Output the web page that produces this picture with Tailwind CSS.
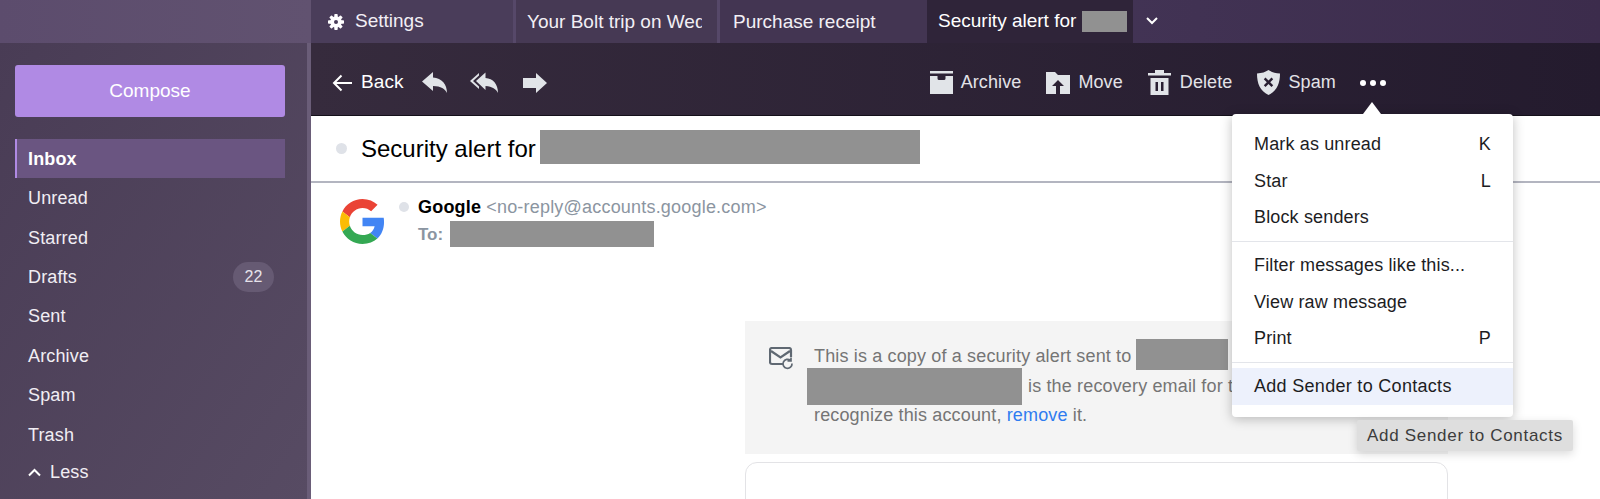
<!DOCTYPE html>
<html lang="en">
<head>
  <meta charset="UTF-8" />
  <title>Security alert - Mail</title>
  <script src="https://cdn.jsdelivr.net/npm/@tailwindcss/browser@4"></script>
</head>
<body class="h-screen overflow-hidden bg-white font-['Liberation_Sans',Arial,sans-serif] text-[16px] antialiased">

  <!-- tab bar -->
  <div class="flex h-[43px] bg-gradient-to-r from-[#5f506f] via-[#46385a] to-[#3c2c4c] text-[#f2eff5]">
    <div class="w-[311px] shrink-0 bg-gradient-to-r from-[#5c4c6d] to-[#615270]"></div>
    <div class="flex h-full w-[205px] items-center gap-[11px] border-r-[3px] border-[#564869] bg-[#4a3d5a] pl-[17px]">
      <svg class="h-[16px] w-[16px]" viewBox="0 0 16 16" fill="#fff">
        <g><rect x="6.3" y="0" width="3.4" height="16" rx="0.8"/><rect x="6.3" y="0" width="3.4" height="16" rx="0.8" transform="rotate(45 8 8)"/><rect x="6.3" y="0" width="3.4" height="16" rx="0.8" transform="rotate(90 8 8)"/><rect x="6.3" y="0" width="3.4" height="16" rx="0.8" transform="rotate(135 8 8)"/></g>
        <circle cx="8" cy="8" r="4.3" fill="none" stroke="#fff" stroke-width="3"/>
        <circle cx="8" cy="8" r="2" fill="#4a3d5a"/>
      </svg>
      <span class="text-[19px]">Settings</span>
    </div>
    <div class="h-full w-[204px] border-r-[3px] border-[#564869] bg-[#463954] pl-[11px] leading-[43px]">
      <span class="block w-[175px] overflow-hidden whitespace-nowrap text-[19px]">Your Bolt trip on Wed</span>
    </div>
    <div class="h-full w-[207px] bg-[#433552] pl-[13px] text-[19px] leading-[43px]">Purchase receipt</div>
    <div class="flex h-full w-[206px] items-center gap-[6px] bg-[#2f2439] pl-[11px] text-white">
      <span class="text-[19px]">Security alert for</span>
      <span class="h-[21px] w-[45px] bg-[#919191]"></span>
    </div>
    <svg class="ml-[12px] mt-[16px] h-[10px] w-[14px]" viewBox="0 0 14 10" fill="none" stroke="#fff" stroke-width="2"><path d="M2 2l5 5 5-5"/></svg>
  </div>

  <div class="flex h-[456px]">
    <!-- sidebar -->
    <aside class="w-[311px] shrink-0 border-r-4 border-[#6a5d78] bg-gradient-to-br from-[#493c55] to-[#574b63] px-[15px] pt-[22px] pr-[22px] text-[#f1eef4]">
      <button class="h-[52px] w-[270px] rounded-[3px] bg-[#b08ae4] pt-[1px] text-[19px] text-white">Compose</button>
      <nav class="mt-[22px] w-[270px] text-[18px] tracking-[0.15px]">
        <a class="flex h-[39px] items-center border-l-2 border-[#b08ae4] bg-[#6a5581] pl-[11px] pt-[1px] font-bold text-white">Inbox</a>
        <a class="mt-[1px] flex h-[39.4px] items-center pl-[13px]">Unread</a>
        <a class="flex h-[39.4px] items-center pl-[13px]">Starred</a>
        <a class="flex h-[39.4px] items-center justify-between pl-[13px] pr-[11px]">Drafts
          <span class="flex h-[30px] w-[41px] items-center justify-center rounded-full bg-[#665a73] text-[16px] tracking-normal text-[#e6e2ea]">22</span>
        </a>
        <a class="flex h-[39.4px] items-center pl-[13px]">Sent</a>
        <a class="flex h-[39.4px] items-center pl-[13px]">Archive</a>
        <a class="flex h-[39.4px] items-center pl-[13px]">Spam</a>
        <a class="flex h-[39.4px] items-center pl-[13px]">Trash</a>
        <a class="flex h-[36px] items-center gap-[9px] pl-[13px]">
          <svg class="h-[9px] w-[13px]" viewBox="0 0 13 9" fill="none" stroke="#fff" stroke-width="2"><path d="M1 7.5l5.5-5.5L12 7.5"/></svg>
          Less
        </a>
      </nav>
    </aside>

    <main class="min-w-0 flex-1">
      <!-- toolbar -->
      <div class="flex h-[73px] items-center border-b border-[#14101a] bg-gradient-to-r from-[#362b3d] to-[#241b2e] pl-[21px] pt-[7px] text-[18px] tracking-[0.1px] text-[#e3e3e8]">
        <svg class="h-[18px] w-[20px]" viewBox="0 0 20 18" fill="none" stroke="#fff" stroke-width="2"><path d="M20 9H2M9.5 1.5L2 9l7.500 7.500"/></svg>
        <span class="ml-[9px] text-[19px] text-white">Back</span>
        <svg class="ml-[18px] h-[21px] w-[25px]" viewBox="0 0 25 21" fill="#e1e4e8"><path d="M0 9.500L11 0v5.500c9 .5 14 7 14 15.500-2-4-6-7-14-7V19z"/></svg>
        <svg class="ml-[23px] h-[21px] w-[28px]" viewBox="0 0 28 21" fill="#e1e4e8"><path d="M9 1L0 9l9 8v-2.600L3 9l6-5.400z"/><path d="M6 9l9.500-8.500v5.500C23 6.500 28 12 28 21c-2-4-5.500-6.500-12.500-7V18z"/></svg>
        <svg class="ml-[25px] h-[20px] w-[24px]" viewBox="0 0 24 20" fill="#e1e4e8"><path d="M0 5h13V0l11 10-11 10v-5H0z"/></svg>

        <svg class="ml-[383px] h-[23px] w-[23px]" viewBox="0 0 23 23" fill="#e1e4e8"><rect width="23" height="2.500"/><path d="M0 5h7.500v2.500q0 1.500 1.500 1.500h5q1.500 0 1.500-1.500V5H23v18H0z"/></svg>
        <span class="ml-[8px]">Archive</span>
        <svg class="ml-[25px] h-[22px] w-[24px]" viewBox="0 0 24 22" fill="#e1e4e8"><path d="M0 0h9l3 3h12v19H14v-8h4l-6-6-6 6h4v8H0z"/></svg>
        <span class="ml-[8px]">Move</span>
        <svg class="ml-[25px] h-[25px] w-[23px]" viewBox="0 0 23 25" fill="#e1e4e8"><path d="M0 3h7V0h9v3h7v2.500H0z"/><path d="M2.500 8h18v17h-18zM7.500 12v9h2.500v-9zM13 12v9h2.500v-9z" fill-rule="evenodd"/></svg>
        <span class="ml-[9px]">Delete</span>
        <svg class="ml-[25px] h-[25px] w-[23px]" viewBox="0 0 23 25" fill="#e1e4e8"><path fill-rule="evenodd" d="M11.500 0c3 2 6.500 3.200 11.500 3.500 0 10-3 17.500-11.500 21.500C3 21 0 13.500 0 3.500 5 3.200 8.500 2 11.500 0zM8.500 7.500L6.800 9.200l3 3-3 3 1.700 1.700 3-3 3 3 1.700-1.700-3-3 3-3-1.700-1.700-3 3z"/></svg>
        <span class="ml-[8px]">Spam</span>
        <div class="ml-[24px] flex gap-[4px]">
          <span class="h-[6px] w-[6px] rounded-full bg-white"></span><span class="h-[6px] w-[6px] rounded-full bg-white"></span><span class="h-[6px] w-[6px] rounded-full bg-white"></span>
        </div>
      </div>

      <!-- subject -->
      <div class="flex h-[67px] items-center border-b-2 border-[#b3b5c0] pl-[25px]">
        <span class="h-[11px] w-[11px] rounded-full bg-[#dfe2e8]"></span>
        <span class="ml-[14px] text-[24px] text-black">Security alert for</span>
        <span class="mb-[4px] ml-[4px] h-[34px] w-[380px] bg-[#919191]"></span>
      </div>

      <!-- sender -->
      <div class="flex h-[138px] pl-[29px] pt-[15px]">
        <svg class="h-[47px] w-[45px]" viewBox="0 0 48 48">
          <path fill="#EA4335" d="M24 9.500c3.540 0 6.710 1.220 9.210 3.600l6.850-6.850C35.900 2.380 30.470 0 24 0 14.620 0 6.510 5.380 2.560 13.220l7.980 6.190C12.430 13.720 17.740 9.500 24 9.500z"/>
          <path fill="#4285F4" d="M46.980 24.550c0-1.570-.15-3.090-.38-4.550H24v9.020h12.940c-.58 2.960-2.260 5.480-4.780 7.180l7.730 6c4.510-4.180 7.090-10.360 7.090-17.650z"/>
          <path fill="#FBBC05" d="M10.530 28.590c-.48-1.450-.76-2.990-.76-4.590s.27-3.140.76-4.590l-7.980-6.190C.92 16.460 0 20.120 0 24c0 3.880.92 7.540 2.560 10.780l7.970-6.190z"/>
          <path fill="#34A853" d="M24 48c6.480 0 11.930-2.130 15.890-5.810l-7.730-6c-2.150 1.450-4.920 2.300-8.160 2.300-6.260 0-11.570-4.220-13.470-9.910l-7.980 6.190C6.510 42.620 14.620 48 24 48z"/>
        </svg>
        <div class="ml-[14px]">
          <div class="flex h-[18px] items-center text-[18px] tracking-[0.2px]">
            <span class="h-[10px] w-[10px] rounded-full bg-[#dfe2e8]"></span>
            <span class="ml-[9px] font-bold text-black">Google</span>
            <span class="ml-[5px] text-[#8b95a1]">&lt;no-reply@accounts.google.com&gt;</span>
          </div>
          <div class="mt-[5px] flex h-[26px] items-center pl-[19px]">
            <span class="mt-[1px] text-[17px] font-bold text-[#8b95a1]">To:</span>
            <span class="ml-[7px] h-[26px] w-[204px] bg-[#919191]"></span>
          </div>
        </div>
      </div>

      <!-- security copy notice -->
      <div class="ml-[434px] flex h-[133px] w-[703px] bg-[#f4f4f4] pl-[24px] pt-[21px] text-[18px] tracking-[0.15px] text-[#757575]">
        <svg class="mt-[5px] h-[24px] w-[25px] shrink-0" viewBox="0 0 25 24" fill="none" stroke="#5f6872" stroke-width="2.200">
          <path d="M14 17H3q-2 0-2-2V3q0-2 2-2h17q2 0 2 2v7"/><path d="M2 4l9.500 6.500L21 4"/>
          <path stroke-width="1.700" d="M23 16.500a4.500 4.500 0 1 1-1.500-3M22 10.500v3.500h-3.500"/>
        </svg>
        <div class="ml-[20px] w-[640px] whitespace-nowrap">
          <div class="flex h-[29.500px] items-center">This is a copy of a security alert sent to
            <span class="mb-[5px] ml-[5px] h-[31px] w-[92px] shrink-0 bg-[#919191]"></span>
          </div>
          <div class="-ml-[7px] flex h-[29.500px] items-center">
            <span class="h-[37px] w-[215px] shrink-0 bg-[#919191]"></span>
            <span class="ml-[6px]">is the recovery email for t</span>
          </div>
          <div class="h-[29.500px] leading-[29.500px]">recognize this account, <a class="text-[#2f7cf0]">remove</a> it.</div>
        </div>
      </div>
      <div class="ml-[434px] mt-[8px] h-[60px] w-[703px] rounded-t-[12px] border border-[#e3e3e6]"></div>
    </main>
  </div>

  <!-- more menu -->
  <div class="absolute left-[1232px] top-[114px] h-[303px] w-[281px] rounded-[4px] bg-white pt-[12px] text-[18px] tracking-[0.15px] text-[#1d1d1f] shadow-[0_2px_12px_rgba(0,0,0,0.25)]">
    <div class="absolute -top-[12px] left-[131px] h-0 w-0 border-x-[9px] border-b-[12px] border-x-transparent border-b-white"></div>
    <div class="flex h-[36.700px] items-center justify-between px-[22px]"><span>Mark as unread</span><span>K</span></div>
    <div class="flex h-[36.700px] items-center justify-between px-[22px]"><span>Star</span><span>L</span></div>
    <div class="flex h-[36.700px] items-center px-[22px]">Block senders</div>
    <div class="my-[5px] h-px bg-[#e3e5ea]"></div>
    <div class="flex h-[36.700px] items-center px-[22px]">Filter messages like this...</div>
    <div class="flex h-[36.700px] items-center px-[22px]">View raw message</div>
    <div class="flex h-[36.700px] items-center justify-between px-[22px]"><span>Print</span><span>P</span></div>
    <div class="my-[5px] h-px bg-[#e3e5ea]"></div>
    <div class="flex h-[37px] items-center bg-[#edf1fc] px-[22px] tracking-[0.3px]">Add Sender to Contacts</div>
  </div>

  <!-- tooltip -->
  <div class="absolute left-[1357px] top-[420px] flex h-[31px] w-[216px] items-center rounded-[2px] bg-[#dedede] pl-[10px] text-[17px] tracking-[0.7px] text-[#3c3c3c] shadow-[0_3px_10px_rgba(0,0,0,0.15)]">Add Sender to Contacts</div>
</body>
</html>
